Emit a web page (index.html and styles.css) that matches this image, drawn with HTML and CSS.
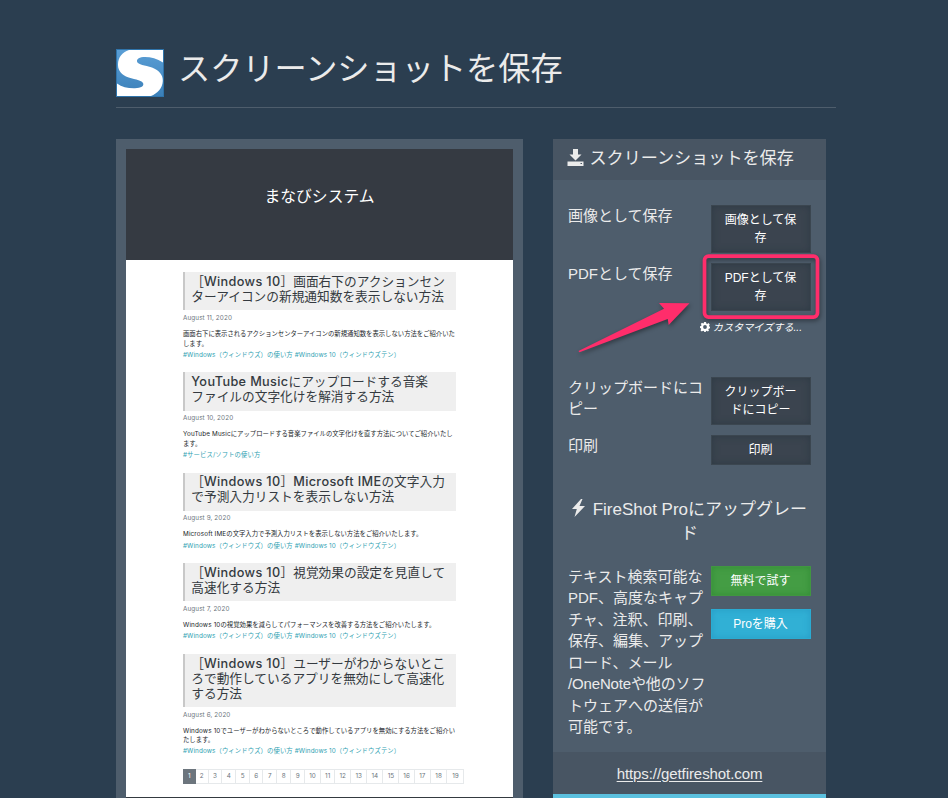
FILE: index.html
```html
<!DOCTYPE html>
<html lang="ja">
<head>
<meta charset="utf-8">
<title>スクリーンショットを保存</title>
<link rel="stylesheet" href="styles.css">
</head>
<body>
<div class="container">
  <header class="page-header">
    <svg class="logo" viewBox="0 0 48 48">
      <defs><linearGradient id="lg" x1="0" y1="0" x2="0" y2="1"><stop offset="0" stop-color="#5b9fd6"/><stop offset="1" stop-color="#3a7fb8"/></linearGradient></defs>
      <rect width="48" height="48" fill="url(#lg)"/>
      <path d="M13 1H47V13.500C41 9.500 35 8 29 8C23.500 8 20.500 10 21 12.500C22 16 29 16.200 36 18.500C43.500 21.500 47 26 46.800 32C46.500 39 41.500 44.500 35 47H1V34.500C6 38 12 39.500 19 39.300C25 39 28.500 37 27 34C25 30.500 17 30.500 10 27.500C4 24.500 1.800 20 2 15C2.200 8.500 6 3.500 13 1Z" fill="#fff"/>
      <rect x=".5" y=".5" width="47" height="47" fill="none" stroke="#2f74ab"/>
    </svg>
    <h1>スクリーンショットを保存</h1>
  </header>
  <main class="columns">
    <section class="preview">
      <div class="site-head">まなびシステム</div>
      <div class="posts">
        <article>
          <h2>［<span class="en">Windows 10</span>］画面右下のアクションセン<br>ターアイコンの新規通知数を表示しない方法</h2>
          <time>August 11, 2020</time>
          <p>画面右下に表示されるアクションセンターアイコンの新規通知数を表示しない方法をご紹介いた<br>します。</p>
          <div class="tags"><a>#Windows（ウィンドウズ）の使い方</a> <a>#Windows 10（ウィンドウズテン）</a></div>
        </article>
        <article>
          <h2><span class="en">YouTube Music</span>にアップロードする音楽<br>ファイルの文字化けを解消する方法</h2>
          <time>August 10, 2020</time>
          <p><span class="en">YouTube Music</span>にアップロードする音楽ファイルの文字化けを直す方法についてご紹介いたし<br>ます。</p>
          <div class="tags"><a>#サービス/ソフトの使い方</a></div>
        </article>
        <article>
          <h2>［<span class="en">Windows 10</span>］<span class="en">Microsoft IME</span>の文字入力<br>で予測入力リストを表示しない方法</h2>
          <time>August 9, 2020</time>
          <p><span class="en">Microsoft IME</span>の文字入力で予測入力リストを表示しない方法をご紹介いたします。</p>
          <div class="tags"><a>#Windows（ウィンドウズ）の使い方</a> <a>#Windows 10（ウィンドウズテン）</a></div>
        </article>
        <article>
          <h2>［<span class="en">Windows 10</span>］視覚効果の設定を見直して<br>高速化する方法</h2>
          <time>August 7, 2020</time>
          <p><span class="en">Windows 10</span>の視覚効果を減らしてパフォーマンスを改善する方法をご紹介いたします。</p>
          <div class="tags"><a>#Windows（ウィンドウズ）の使い方</a> <a>#Windows 10（ウィンドウズテン）</a></div>
        </article>
        <article>
          <h2>［<span class="en">Windows 10</span>］ユーザーがわからないとこ<br>ろで動作しているアプリを無効にして高速化<br>する方法</h2>
          <time>August 6, 2020</time>
          <p><span class="en">Windows 10</span>でユーザーがわからないところで動作しているアプリを無効にする方法をご紹介い<br>たします。</p>
          <div class="tags"><a>#Windows（ウィンドウズ）の使い方</a> <a>#Windows 10（ウィンドウズテン）</a></div>
        </article>
        <nav class="pages"><b>1</b><span>2</span><span>3</span><span>4</span><span>5</span><span>6</span><span>7</span><span>8</span><span>9</span><span>10</span><span>11</span><span>12</span><span>13</span><span>14</span><span>15</span><span>16</span><span>17</span><span>18</span><span>19</span></nav>
      </div>
      <div class="site-foot"></div>
    </section>
    <aside class="side">
      <div class="panel">
        <div class="panel-heading">
          <svg class="ico-save" viewBox="0 0 17 17"><path d="M6 0h5v5.500h3.500L8.500 11.500 2.500 5.500H6z"/><path d="M.5 12.500h16V17H.5z"/><path class="dot" d="M13.500 14h1.500v1h-1.500z"/></svg>
          <span>スクリーンショットを保存</span>
        </div>
        <div class="panel-body">
          <div class="row image"><div class="label">画像として保存</div><button>画像として保<br>存</button></div>
          <div class="row pdf"><div class="label">PDFとして保存</div><button>PDFとして保<br>存</button></div>
          <div class="customize">
            <svg viewBox="0 0 20 20"><path fill-rule="evenodd" d="M8 0h4l.6 3 1.800.8L17 2l2.500 2.800L18 7.500l.5 1.500 1.500.5v3l-2.500.8-.8 1.600L18 17.500 15.500 19l-2-1.300-1.500.5-.6 1.800H8.500L8 18l-1.800-.7L3.500 19 1 16.500l1.500-2.300-.8-1.800L0 12V8.500L2.200 8 3 6.200 1.500 3.800 4 1.500l2.300 1.400L7.500 2.500zM10 6.200a3.800 3.800 0 1 0 0 7.600a3.800 3.800 0 1 0 0-7.600z"/></svg>
            <em>カスタマイズする...</em>
          </div>
          <div class="row clip"><div class="label">クリップボードにコ<br>ピー</div><button>クリップボー<br>ドにコピー</button></div>
          <div class="row print"><div class="label">印刷</div><button>印刷</button></div>
          <h3><svg class="ico-bolt" viewBox="0 0 13 18"><path d="M9 0L0 10h4.800L2.500 18 13 7H7.500L10.500 0z"/></svg> FireShot Proにアップグレー<br>ド</h3>
          <div class="row pro">
            <div class="label">テキスト検索可能な<br>PDF、高度なキャプ<br>チャ、注釈、印刷、<br>保存、編集、アップ<br>ロード、メール<br><span class="tight">/OneNoteや他のソフ</span><br>トウェアへの送信が<br>可能です。</div>
            <div class="actions"><button class="green">無料で試す</button><button class="blue">Proを購入</button></div>
          </div>
        </div>
        <div class="panel-footer"><a>https://getfireshot.com</a></div>
        <svg class="annotation" viewBox="0 0 262 110"><path d="M20.500 101L106 58.700 101 53l30.500.3L110.700 75l-1-6L21.500 102.300z" fill="#ff2d6b"/><rect x="146.500" y="6.100" width="113" height="61" rx="4" fill="none" stroke="#ff2d6b" stroke-width="3.700"/></svg>
      </div>
      <div class="next-panel"></div>
    </aside>
  </main>
</div>
</body>
</html>
```
FILE: styles.css
```css
* { box-sizing: border-box; }
html { overflow: hidden; }
body {
  margin: 0;
  height: 798px;
  overflow: hidden;
  background: #2b3e50;
  color: #ebebeb;
  font: 15px/21.43px "Liberation Sans", "Noto Sans CJK JP", sans-serif;
  white-space: nowrap;
}
.container { width: 720px; height: 798px; overflow: hidden; margin-left: 116px; padding-top: 49px; }
.page-header {
  display: flex;
  height: 59px;
  margin-bottom: 31px;
  border-bottom: 1px solid #4e5d6c;
}
.logo { width: 48px; height: 48px; margin-right: 14px; }
h1 { margin: 0; font-size: 32.200px; font-weight: 400; line-height: 41px; }
.columns { display: flex; gap: 30px; align-items: flex-start; }

.preview {
  width: 407px;
  height: 659px;
  overflow: hidden;
  padding: 10px 10px 0;
  background: #4e5d6c;
  font-family: Inter, "Noto Sans CJK JP", sans-serif;
}
.site-head {
  height: 111px;
  background: #353a42;
  color: #fff;
  font-size: 15.800px;
  line-height: 95px;
  text-align: center;
}
.posts {
  height: 537px;
  padding: 12.300px 0 0 57px;
  background: #fff;
  color: #212529;
  font-size: 6.350px;
  line-height: 9.500px;
}
article { width: 273px; margin-bottom: 12.200px; }
h2 {
  margin: 0 0 3.700px;
  padding: 1.700px 0 6.200px 6.300px;
  border-left: 2px solid #c8c8c8;
  background: #efefef;
  font-size: 12.700px;
  font-weight: 400;
  line-height: 15.150px;
  color: #343a40;
}
h2 .en { font-weight: 500; letter-spacing: .350px; }
time { display: block; color: #6c757d; letter-spacing: .1px; }
.posts p { margin: 6.400px 0 1.700px; }
.posts p .en { letter-spacing: .150px; }
.tags { color: #2f9fb2; letter-spacing: .100px; }
.pages {
  display: grid;
  grid-template-columns: 12.500px 13.300px 13.300px 14.200px 13.800px 13.400px 13.800px 14px 13.700px 16.200px 14px 16px 16px 16.300px 16px 15.300px 16px 16.700px 16px;
  width: 281px;
  height: 15px;
  margin-top: 10px;
  border: 1px solid #e6e9eb;
  border-left: 0;
  color: #6c757d;
  line-height: 13px;
  text-align: center;
}
.pages span { border-right: 1px solid #e6e9eb; }
.pages span:last-child { border-right: 0; }
.pages b { margin: -1px 0; background: #6c757d; color: #fff; font-weight: 400; line-height: 15px; }
.site-foot { height: 42px; background: #343a40; }

.side { width: 273px; }
.panel { position: relative; background: #4e5d6c; }
.panel-heading {
  display: flex;
  height: 41px;
  padding: 10px 14px;
  gap: 5.500px;
  background: #485563;
  font-size: 17.100px;
  line-height: 20px;
}
.ico-save { width: 17px; height: 17px; fill: #ebebeb; }
.dot { fill: #485563; }
.panel-body { height: 572px; padding: 25px 15px 0; }
.row { display: flex; justify-content: space-between; }
.image, .pdf { height: 57.500px; }
.tight { letter-spacing: -.150px; }
button {
  display: block;
  width: 100px;
  height: 48px;
  padding: 5px 1px 5px 0;
  border: 1px solid #3b4650;
  background: #3b444f;
  box-shadow: inset 0 0 7px rgba(40, 54, 64, .7);
  color: #fff;
  font: 12px/18px "Liberation Sans", "Noto Sans CJK JP", sans-serif;
}
.customize {
  display: flex;
  justify-content: flex-end;
  gap: 3px;
  height: 57px;
  padding-right: 9px;
  color: #fff;
  font-size: 10.150px;
  line-height: 15px;
}
.customize svg { width: 10px; height: 10px; margin-top: 2px; fill: #fff; }
.clip { height: 58px; }
.print button, .actions button { height: 30px; }
h3 {
  margin: 0;
  padding-top: 33px;
  height: 101px;
  font-size: 17px;
  font-weight: 400;
  line-height: 23.800px;
  text-align: center;
}
.ico-bolt { width: 13px; height: 18px; margin-right: 3px; vertical-align: -2px; fill: #ebebeb; }
.actions { display: flex; flex-direction: column; gap: 13px; }
.green { background: #449d44; border-color: #419641; box-shadow: inset 0 0 6px rgba(40, 130, 45, .6); }
.blue { background: #31b0d5; border-color: #2aabd2; box-shadow: inset 0 0 6px rgba(35, 145, 190, .6); }
.panel-footer { height: 42px; padding-top: 11px; background: #485563; text-align: center; letter-spacing: -.080px; }
.panel-footer a { text-decoration: underline; text-underline-offset: 2px; }
.annotation {
  position: absolute;
  left: 5px;
  top: 111px;
  width: 262px;
  height: 110px;
  overflow: visible;
  filter: drop-shadow(1px 2px 2px rgba(0, 0, 0, .4));
}
.next-panel { height: 4px; background: #5bc0de; }
```
